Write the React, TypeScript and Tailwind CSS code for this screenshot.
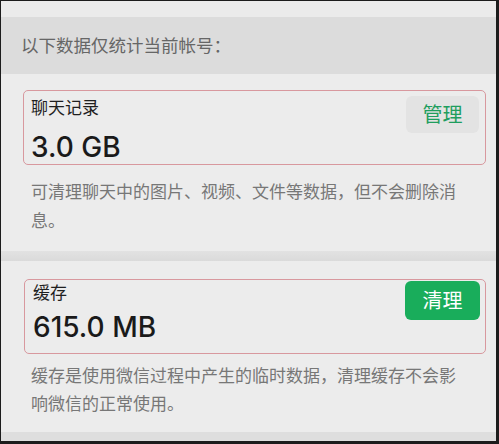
export default function App() {
  const font = { fontFamily: '"Noto Sans", "Noto Sans CJK SC", sans-serif' };
  return (
    <div className="w-[499px] h-[444px] bg-[#1c1c1c] pt-px pl-px pr-[3px] pb-[3px]" style={font}>
      <div className="h-full bg-[#ececec] flex flex-col">
        <div className="h-[16px] shrink-0 bg-[#ebebeb]" />
        <div className="h-[57px] shrink-0 bg-[#dcdcdc] flex items-center px-[20px] text-[17.5px] text-[#666]">
          以下数据仅统计当前帐号：
        </div>

        {/* 聊天记录 */}
        <section className="h-[177px] shrink-0 pl-[22px] pr-[10px] pt-[16px]">
          <div className="h-[75px] border border-[#d8989e] rounded-[5px] flex justify-between pl-[7px] pr-[6px]">
            <div className="flex flex-col">
              <span className="mt-[5px] text-[17px] leading-[24px] text-[#1f1f1f]">聊天记录</span>
              <span className="mt-[10px] text-[28px] leading-[34px] font-medium text-[#1a1a1a]" style={{ fontFamily: "Inter, sans-serif" }}>
                3.0 GB
              </span>
            </div>
            <button className="mt-[5px] w-[73px] h-[37px] rounded-[6px] bg-[#e3e3e3] text-[20px] text-[#1f9e5e]">
              管理
            </button>
          </div>
          <p className="mt-[12px] pl-[8px] w-[438px] text-[17px] leading-[29px] text-[#777]">
            可清理聊天中的图片、视频、文件等数据，但不会删除消息。
          </p>
        </section>

        <div className="h-[10px] shrink-0 bg-gradient-to-b from-[#e2e2e2] to-[#dadada]" />

        {/* 缓存 */}
        <section className="flex-1 pl-[23px] pr-[10px] pt-[18px]">
          <div className="h-[75px] border border-[#d8989e] rounded-[5px] flex justify-between pl-[8px] pr-[5px]">
            <div className="flex flex-col">
              <span className="mt-[1px] text-[17px] leading-[24px] text-[#1f1f1f]">缓存</span>
              <span className="mt-[5px] text-[28px] leading-[34px] font-medium text-[#1a1a1a]" style={{ fontFamily: "Inter, sans-serif" }}>
                615.0 MB
              </span>
            </div>
            <button className="mt-[1px] w-[75px] h-[39px] rounded-[6px] bg-[#19ad5b] text-[20px] text-white">
              清理
            </button>
          </div>
          <p className="mt-[8px] pl-[7px] w-[437px] text-[17px] leading-[28px] text-[#777]">
            缓存是使用微信过程中产生的临时数据，清理缓存不会影响微信的正常使用。
          </p>
        </section>

        <div className="h-[9px] shrink-0 bg-[#dedede]" />
      </div>
    </div>
  );
}
